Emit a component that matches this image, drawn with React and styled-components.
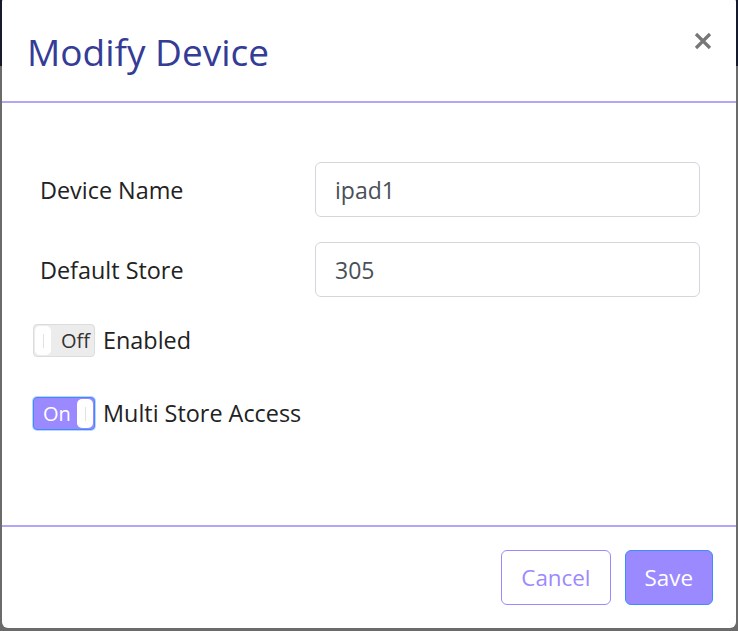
import React from 'react';
import styled, { createGlobalStyle } from 'styled-components';

const Global = createGlobalStyle`
  html, body {
    margin: 0;
    padding: 0;
    height: 100%;
    font-family: "Open Sans", "Noto Sans", sans-serif;
  }
  body {
    background: linear-gradient(to bottom, #151a2c 0, #151a2c 66px, #6b6b6b 66px, #6b6b6b 100%);
    overflow: hidden;
  }
`;

const Backdrop = styled.div`
  height: 631px;
  padding: 0 2px 3px 2px;
  box-sizing: border-box;
  display: flex;
`;

const Modal = styled.div`
  flex: 1;
  margin-top: -4px;
  background: #fff;
  border-radius: 6px;
  display: flex;
  flex-direction: column;
`;

const Header = styled.div`
  height: 107px;
  flex-shrink: 0;
  padding: 0 24px 0 25px;
  display: flex;
  align-items: center;
  justify-content: space-between;
  border-bottom: 2px solid #b2a6f6;
  box-sizing: border-box;
`;

const Title = styled.h2`
  margin: 6px 0 0;
  font-size: 37px;
  font-weight: 400;
  color: #343c96;
`;

const Close = styled.button`
  border: 0;
  background: none;
  padding: 0;
  margin-top: -16px;
  cursor: pointer;
  display: flex;
`;

const Body = styled.div`
  flex: 1;
  padding: 59px 36px 0 31px;
  display: flex;
  flex-direction: column;
`;

const FieldRow = styled.div`
  display: flex;
  align-items: center;
  margin-bottom: 25px;
`;

const Label = styled.label`
  width: 282px;
  padding-left: 7px;
  box-sizing: border-box;
  font-size: 23.4px;
  color: #222;
`;

const Input = styled.input`
  flex: 1;
  min-width: 0;
  height: 55px;
  box-sizing: border-box;
  border: 1px solid #d3d6db;
  border-radius: 6px;
  padding: 0 19px;
  font-family: inherit;
  font-size: 23px;
  color: #495057;
  outline: none;
`;

const ToggleRow = styled.div`
  display: flex;
  align-items: center;
  gap: 8px;
  margin-top: ${(p) => p.$top}px;
`;

const Toggle = styled.div`
  width: 62px;
  height: 33px;
  box-sizing: border-box;
  border-radius: 4px;
  border: 1px solid ${(p) => (p.$on ? '#3d8bff' : '#dcdcdc')};
  background: ${(p) => (p.$on ? '#9b89ff' : '#ececec')};
  display: flex;
  flex-direction: ${(p) => (p.$on ? 'row' : 'row-reverse')};
  align-items: center;
  justify-content: space-between;
  padding: 1px;
  box-shadow: ${(p) => (p.$on ? '0 0 0 1px rgba(61,139,255,0.35)' : 'none')};
`;

const ToggleText = styled.span`
  font-size: 20px;
  color: ${(p) => (p.$on ? '#fff' : '#333')};
  padding: ${(p) => (p.$on ? '0 0 0 8px' : '0 3px 0 0')};
`;

const Handle = styled.span`
  width: 16px;
  align-self: stretch;
  background: #fff;
  border-radius: 5px;
  display: flex;
  align-items: center;
  justify-content: center;
  &::after {
    content: '';
    width: 1px;
    height: 14px;
    background: #e2e2e2;
  }
`;

const ToggleLabel = styled.span`
  font-size: 23.4px;
  color: #222;
  margin-top: -2px;
`;

const Footer = styled.div`
  height: 103px;
  flex-shrink: 0;
  border-top: 2px solid #b2a6f6;
  box-sizing: border-box;
  display: flex;
  justify-content: flex-end;
  align-items: center;
  gap: 14px;
  padding: 0 23px 0 0;
`;

const Button = styled.button`
  height: 55px;
  padding: 0 19px;
  border-radius: 6px;
  font-family: inherit;
  font-size: 22.4px;
  cursor: pointer;
  border: 1px solid ${(p) => (p.$primary ? '#3d8bff' : '#9b89ff')};
  background: ${(p) => (p.$primary ? '#9b89ff' : '#fff')};
  color: ${(p) => (p.$primary ? '#fff' : '#9b89ff')};
`;

function Switch({ on }) {
  return (
    <Toggle $on={on}>
      <ToggleText $on={on}>{on ? 'On' : 'Off'}</ToggleText>
      <Handle />
    </Toggle>
  );
}

export default function App() {
  return (
    <>
      <Global />
      <Backdrop>
        <Modal>
          <Header>
            <Title>Modify Device</Title>
            <Close aria-label="Close">
              <svg width="18" height="18" viewBox="0 0 18 18">
                <path d="M2 2 L16 16 M16 2 L2 16" stroke="#777" strokeWidth="3.2" />
              </svg>
            </Close>
          </Header>
          <Body>
            <FieldRow>
              <Label>Device Name</Label>
              <Input defaultValue="ipad1" />
            </FieldRow>
            <FieldRow>
              <Label>Default Store</Label>
              <Input defaultValue="305" />
            </FieldRow>
            <ToggleRow $top={2}>
              <Switch on={false} />
              <ToggleLabel>Enabled</ToggleLabel>
            </ToggleRow>
            <ToggleRow $top={40}>
              <Switch on />
              <ToggleLabel>Multi Store Access</ToggleLabel>
            </ToggleRow>
          </Body>
          <Footer>
            <Button>Cancel</Button>
            <Button $primary>Save</Button>
          </Footer>
        </Modal>
      </Backdrop>
    </>
  );
}
